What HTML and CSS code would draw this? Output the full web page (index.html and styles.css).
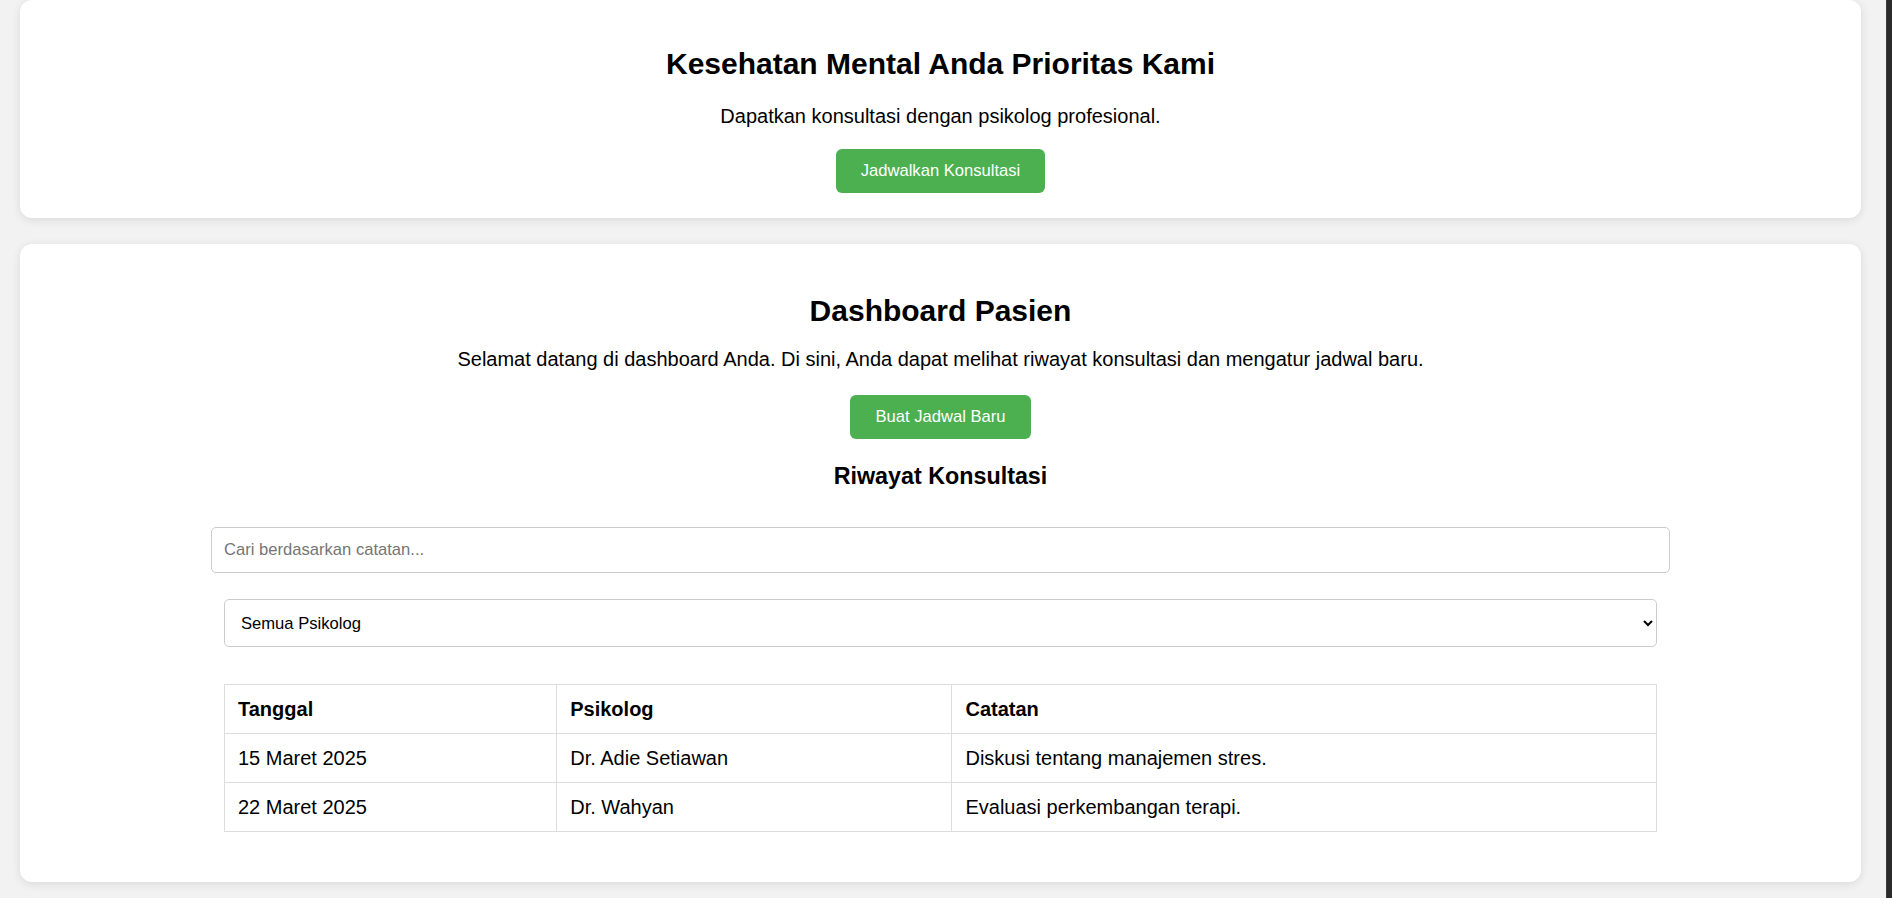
FILE: index.html
```html
<!DOCTYPE html>
<html lang="id">
<head>
<meta charset="utf-8">
<title>Dashboard Pasien</title>
<link rel="stylesheet" href="styles.css">
</head>
<body>
  <div class="page">
    <section class="card hero">
      <h2 class="title">Kesehatan Mental Anda Prioritas Kami</h2>
      <p class="lead">Dapatkan konsultasi dengan psikolog profesional.</p>
      <button class="btn" type="button">Jadwalkan Konsultasi</button>
    </section>

    <section class="card dashboard">
      <h2 class="title">Dashboard Pasien</h2>
      <p class="lead">Selamat datang di dashboard Anda. Di sini, Anda dapat melihat riwayat konsultasi dan mengatur jadwal baru.</p>
      <button class="btn" type="button">Buat Jadwal Baru</button>
      <h3 class="subtitle">Riwayat Konsultasi</h3>

      <div class="history">
        <input class="search" type="text" placeholder="Cari berdasarkan catatan...">
        <div class="filters">
          <select class="filter">
            <option>Semua Psikolog</option>
            <option>Dr. Adie Setiawan</option>
            <option>Dr. Wahyan</option>
          </select>
        </div>
        <table class="records">
          <thead>
            <tr>
              <th class="col-date">Tanggal</th>
              <th class="col-psy">Psikolog</th>
              <th>Catatan</th>
            </tr>
          </thead>
          <tbody>
            <tr>
              <td>15 Maret 2025</td>
              <td>Dr. Adie Setiawan</td>
              <td>Diskusi tentang manajemen stres.</td>
            </tr>
            <tr>
              <td>22 Maret 2025</td>
              <td>Dr. Wahyan</td>
              <td>Evaluasi perkembangan terapi.</td>
            </tr>
          </tbody>
        </table>
      </div>
    </section>
  </div>
  <div class="edge"></div>
</body>
</html>
```

FILE: styles.css
```css
html {
  overflow: hidden;
}

body {
  margin: 0;
  min-height: 100vh;
  display: flex;
  background: #f2f2f2;
  color: #000;
  font-family: "Liberation Sans", Arial, sans-serif;
}

.page {
  flex: 1;
  padding: 0 25px 0 20px;
}

.edge {
  width: 6px;
  flex: none;
  background: #2b2b2b;
  border-left: 1px solid #3a3a3a;
  box-sizing: border-box;
}

.card {
  background: #fff;
  border-radius: 12px;
  box-shadow: 0 2px 10px rgba(0, 0, 0, 0.1);
  padding: 24px 24px 25px;
  text-align: center;
}

.hero {
  padding-top: 21px;
  margin-bottom: 26px;
}

.dashboard {
  padding-bottom: 50px;
}

.title {
  margin: 26px 0 24px;
  font-size: 30px;
  line-height: 34px;
  font-weight: bold;
}

.dashboard .title {
  margin-bottom: 20px;
}

.lead {
  margin: 0 0 21px;
  font-size: 20px;
  line-height: 23px;
}

.dashboard .lead {
  margin-bottom: 24px;
}

.btn {
  display: inline-block;
  margin: 0;
  padding: 12px 25px;
  border: none;
  border-radius: 6px;
  background: #4caf50;
  color: #fff;
  font-family: "Liberation Sans", Arial, sans-serif;
  font-size: 16.6px;
  line-height: 20px;
  cursor: pointer;
}

.subtitle {
  margin: 24px 0 37px;
  font-size: 23.3px;
  line-height: 27px;
  font-weight: bold;
}

.history {
  max-width: 1459px;
  margin: 0 auto;
  text-align: left;
}

.search {
  display: block;
  width: 100%;
  box-sizing: border-box;
  margin: 0;
  padding: 12px 12px;
  border: 1px solid #ccc;
  border-radius: 5px;
  font-family: "Liberation Sans", Arial, sans-serif;
  font-size: 16.6px;
  line-height: 20px;
  color: #000;
  background: #fff;
}

.search::placeholder {
  color: #757575;
}

.filters {
  margin: 26px 13px 0;
}

.filter {
  display: block;
  width: 100%;
  box-sizing: border-box;
  height: 48px;
  margin: 0;
  padding: 0 12px;
  border: 1px solid #ccc;
  border-radius: 5px;
  background-color: #fff;
  color: #000;
  font-family: "Liberation Sans", Arial, sans-serif;
  font-size: 16.6px;
}

.records {
  width: calc(100% - 26px);
  margin: 37px 13px 0;
  border-collapse: collapse;
  font-size: 20px;
  line-height: 22px;
}

.records th,
.records td {
  border: 1px solid #ddd;
  padding: 13px 13px;
  text-align: left;
}

.records th {
  font-weight: bold;
}

.col-date {
  width: 23.2%;
}

.col-psy {
  width: 27.6%;
}
```
